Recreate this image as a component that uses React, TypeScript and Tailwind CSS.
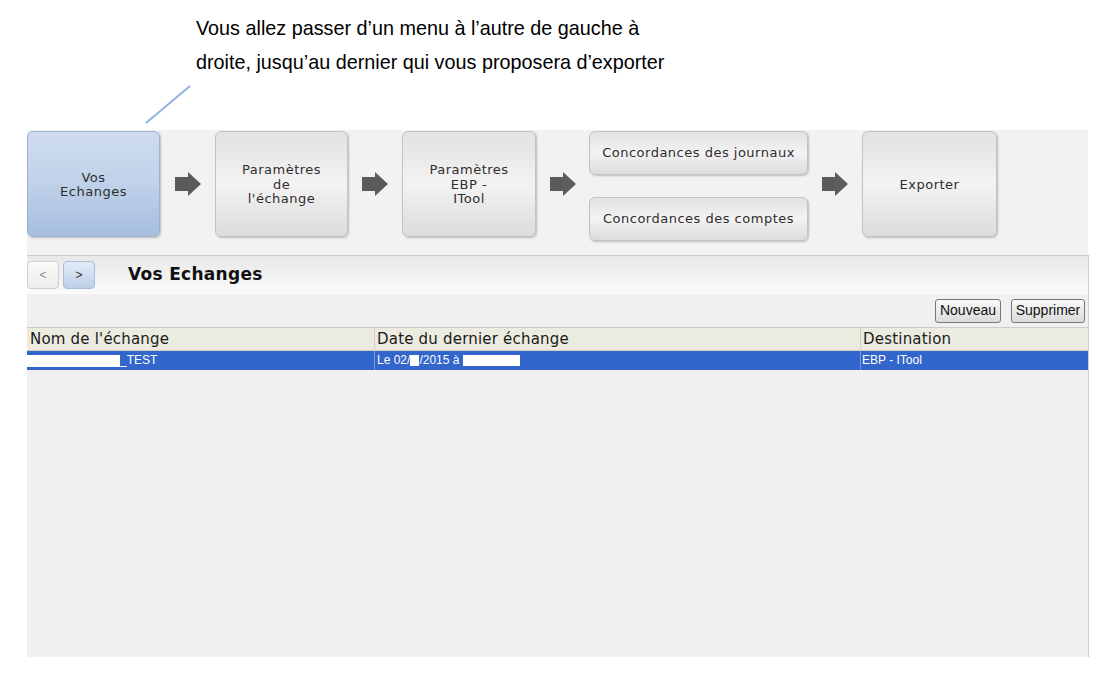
import React from "react";

const verdana = "font-['DejaVu_Sans','Verdana',sans-serif]";
const arial = "font-['Liberation_Sans','Arial',sans-serif]";

function Arrow() {
  return (
    <svg width="26" height="24" viewBox="0 0 26 24">
      <rect x="0" y="5" width="14" height="14" fill="#5b5b5b" />
      <polygon points="13,0 26,12 13,24" fill="#5b5b5b" />
    </svg>
  );
}

function ArrowCell({ w }: { w: string }) {
  return <div className={`${w} h-[106px] flex items-center justify-center`}><Arrow /></div>;
}

function StepBox({ lines, w, active }: { lines: string[]; w: string; active?: boolean }) {
  const skin = active
    ? "bg-linear-to-b from-[#cfdcee] via-[#c0d1e9] to-[#a7bedf] border-[#9cb2cf]"
    : "bg-linear-to-b from-[#e2e2e2] via-[#f4f2f2] to-[#dcdcdc] border-[#c3c3c3]";
  return (
    <div
      className={`${w} h-[106px] rounded-[6px] border ${skin} shadow-[1px_1px_2px_rgba(0,0,0,0.22)] flex flex-col items-center justify-center pt-[2px] text-[13px] leading-[14.5px] tracking-[0.5px] text-[#2e2e2e] ${verdana}`}
    >
      {lines.map((l) => (
        <span key={l}>{l}</span>
      ))}
    </div>
  );
}

function WideBox({ label }: { label: string }) {
  return (
    <div
      className={`w-[219px] h-[44px] rounded-[6px] border border-[#c3c3c3] bg-linear-to-b from-[#e2e2e2] via-[#f4f2f2] to-[#dcdcdc] shadow-[1px_1px_2px_rgba(0,0,0,0.22)] flex items-center justify-center text-[13px] tracking-[0.5px] text-[#2e2e2e] ${verdana}`}
    >
      {label}
    </div>
  );
}

export default function App() {
  return (
    <div className={`relative w-[1108px] h-[683px] bg-white ${arial}`}>
      {/* callout pointer */}
      <svg className="absolute left-0 top-0" width="300" height="130">
        <line x1="190" y1="86" x2="146" y2="123" stroke="#8fb3e0" strokeWidth="2" />
      </svg>

      <div className="h-[130px] pl-[196px] pt-[11px] text-[19.8px] leading-[34px] text-black">
        <div>Vous allez passer d’un menu à l’autre de gauche à</div>
        <div>droite, jusqu’au dernier qui vous proposera d’exporter</div>
      </div>

      {/* steps band */}
      <div className="ml-[27px] w-[1061px] h-[125px] bg-[#f2f2f2] flex items-start pt-[1px]">
        <StepBox w="w-[133px]" lines={["Vos", "Echanges"]} active />
        <ArrowCell w="w-[55px]" />
        <StepBox w="w-[133px]" lines={["Paramètres", "de", "l'échange"]} />
        <ArrowCell w="w-[54px]" />
        <StepBox w="w-[134px]" lines={["Paramètres", "EBP -", "ITool"]} />
        <ArrowCell w="w-[53px]" />
        <div className="flex flex-col gap-[22px]">
          <WideBox label="Concordances des journaux" />
          <WideBox label="Concordances des comptes" />
        </div>
        <ArrowCell w="w-[54px]" />
        <StepBox w="w-[135px]" lines={["Exporter"]} />
      </div>

      {/* main panel */}
      <div className="ml-[27px] w-[1062px] h-[402px] bg-[#f0f0f0] border-t border-r border-[#cdcdcd]">
        <div className="h-[38px] bg-linear-to-b from-[#e8e8e8] to-[#fbfbfb] flex items-center">
          <button className="w-[32px] h-[28px] rounded-[4px] border border-[#cfcfcf] bg-linear-to-b from-[#fbfbfb] to-[#ececec] text-[12px] text-[#8a8a8a] flex items-center justify-center">
            &lt;
          </button>
          <button className="ml-[4px] w-[32px] h-[28px] rounded-[4px] border border-[#a9bdd6] bg-linear-to-b from-[#e3ecf7] to-[#bccfe7] text-[12px] text-[#333] flex items-center justify-center">
            &gt;
          </button>
          <span className={`ml-[33px] text-[17px] tracking-[0.3px] font-bold text-[#111] ${verdana}`}>Vos Echanges</span>
        </div>

        <div className="h-[33px] flex items-center justify-end gap-[10px] pr-[3px]">
          <button className="w-[66px] h-[24px] rounded-[3px] border border-[#767676] bg-linear-to-b from-[#fafafa] to-[#dadada] text-[14px] text-[#111]">
            Nouveau
          </button>
          <button className="w-[74px] h-[24px] rounded-[3px] border border-[#767676] bg-linear-to-b from-[#fafafa] to-[#dadada] text-[14px] text-[#111]">
            Supprimer
          </button>
        </div>

        <div className={`h-[24px] flex bg-[#ecebdf] border-y border-[#cfcdbf] text-[15px] tracking-[0.2px] leading-[22px] text-[#1b1b1b] ${verdana}`}>
          <div className="w-[348px] pl-[3px] border-r border-[#d2d0c2]">Nom de l'échange</div>
          <div className="w-[486px] pl-[2px] border-r border-[#d2d0c2]">Date du dernier échange</div>
          <div className="flex-1 pl-[2px]">Destination</div>
        </div>

        <div className="h-[19px] flex bg-[#3366cc] text-white text-[12px] leading-[19px]">
          <div className="w-[348px] flex items-center border-r border-[#7d9ad9]">
            <span className="w-[93px] h-[12px] bg-white" />
            <span>_TEST</span>
          </div>
          <div className="w-[486px] flex items-center pl-[2px] border-r border-[#7d9ad9]">
            <span>Le 02/</span>
            <span className="w-[9px] h-[11px] bg-white" />
            <span>/2015 à&nbsp;</span>
            <span className="w-[57px] h-[11px] bg-white" />
          </div>
          <div className="flex-1 pl-[1px]">EBP - ITool</div>
        </div>
      </div>
    </div>
  );
}
